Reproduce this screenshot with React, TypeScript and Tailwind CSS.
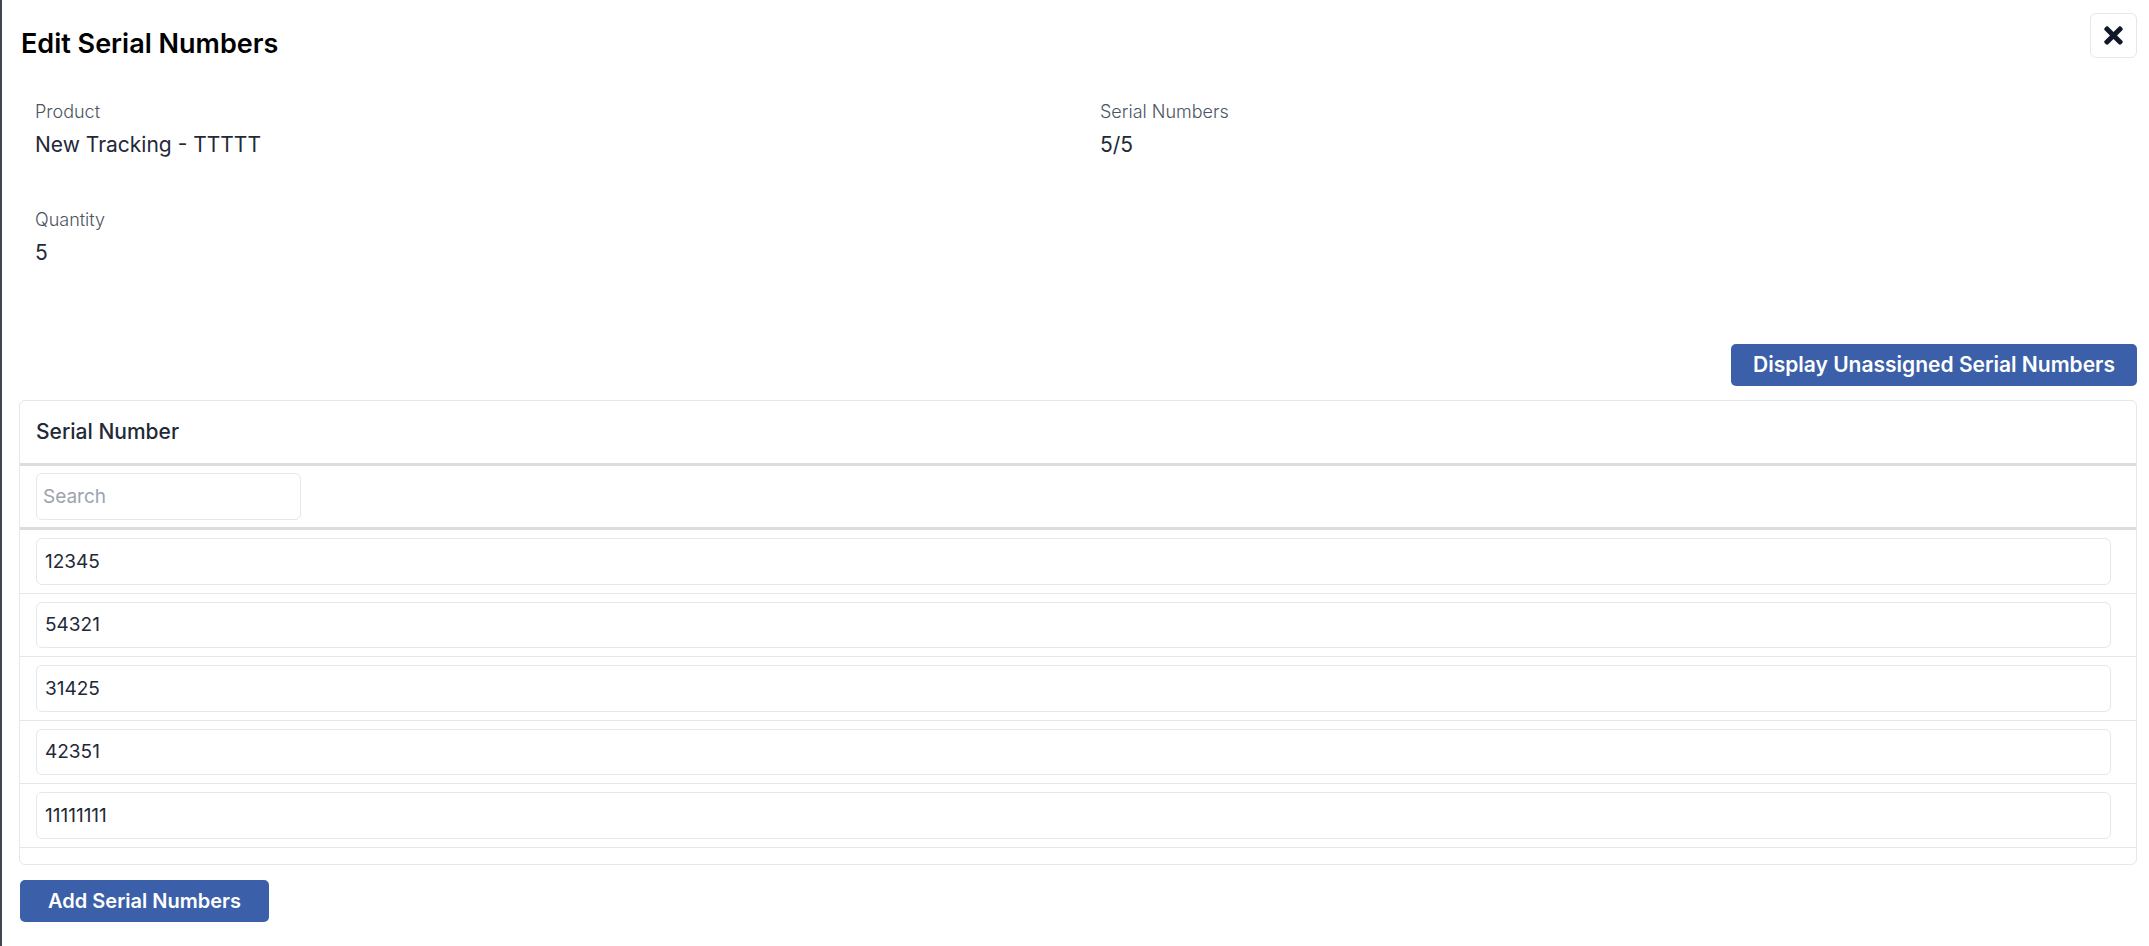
import { FaTimes } from "react-icons/fa";

const serials = ["12345", "54321", "31425", "42351", "11111111"];

function Field({ label, value }: { label: string; value: string }) {
  return (
    <div className="flex flex-col px-4">
      <span className="text-[18px] font-light leading-[24px] text-[#4b5563]">{label}</span>
      <span className="mt-[7px] text-[21px] leading-[28px] text-[#1f2937]">{value}</span>
    </div>
  );
}

export default function App() {
  return (
    <div
      className="flex min-h-[946px] w-full flex-col border-l-2 border-[#3f4652] bg-white pl-[17px] pr-[12px]"
      style={{ fontFamily: "Inter, 'Noto Sans', sans-serif" }}
    >
      <div className="flex h-[71px] items-start justify-between">
        <h1 className="mt-[27px] pl-[2px] text-[27px] font-semibold leading-[34px] text-black">
          Edit Serial Numbers
        </h1>
        <button
          type="button"
          aria-label="Close"
          className="mt-[13px] flex h-[45px] w-[47px] items-center justify-center rounded-md border border-[#e5e7eb] bg-white text-[#111827]"
        >
          <FaTimes className="h-[27px] w-[27px]" />
        </button>
      </div>

      <div className="grid grid-cols-[1065px_1fr] gap-y-[49px] pt-[29px]">
        <Field label="Product" value="New Tracking - TTTTT" />
        <Field label="Serial Numbers" value="5/5" />
        <Field label="Quantity" value="5" />
      </div>

      <div className="flex justify-end pt-[77px]">
        <button
          type="button"
          className="h-[42px] w-[406px] rounded-[5px] bg-[#3b60a9] text-[21px] font-semibold text-white"
        >
          Display Unassigned Serial Numbers
        </button>
      </div>

      <div className="mt-[14px] overflow-hidden rounded-md border border-[#e5e7eb]">
        <div className="flex h-[65px] items-center border-b-[3px] border-[#dddddd] px-4 text-[21px] font-medium text-[#1f2937]">
          Serial Number
        </div>
        <div className="border-b-[3px] border-[#dddddd] py-[7px] pl-4">
          <input
            placeholder="Search"
            className="h-[47px] w-[265px] rounded-md border border-[#e5e7eb] px-[6px] text-[19px] text-[#1f2937] outline-none placeholder:text-[#9ca3af]"
          />
        </div>
        {serials.map((sn) => (
          <div key={sn} className="border-b border-[#e5e7eb] py-2 pl-4 pr-[25px]">
            <input
              defaultValue={sn}
              className="h-[46.5px] w-full rounded-md border border-[#e5e7eb] px-2 text-[19px] text-[#1f2937] outline-none"
            />
          </div>
        ))}
        <div className="h-[16px]" />
      </div>

      <div className="pt-[15px]">
        <button
          type="button"
          className="ml-[1px] h-[42px] w-[249px] rounded-[5px] bg-[#3b60a9] text-[20px] font-semibold text-white"
        >
          Add Serial Numbers
        </button>
      </div>
    </div>
  );
}
